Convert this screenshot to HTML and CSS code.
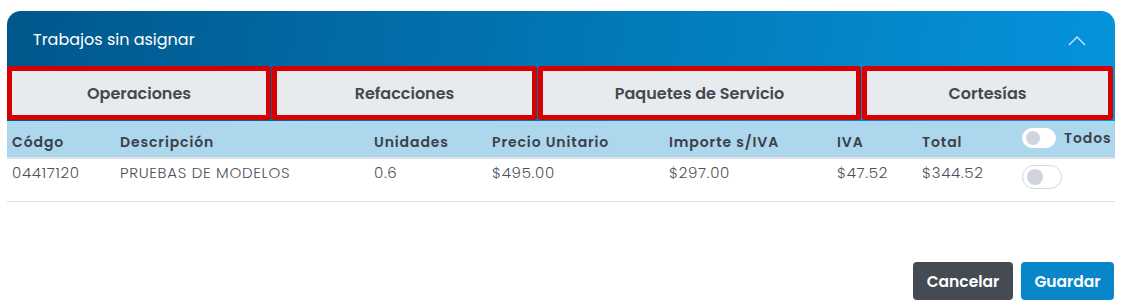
FILE: index.html
```html
<!DOCTYPE html>
<html lang="es">
<head>
<meta charset="utf-8">
<link rel="stylesheet" href="styles.css">
</head>
<body>
<div class="card">
  <div class="head">
    <div class="title-row">
      <span class="title">Trabajos sin asignar</span>
      <svg class="chev" width="18" height="11" viewBox="0 0 18 11"><path d="M1 10 L9 2 L17 10" fill="none" stroke="#cfe6f5" stroke-width="1.4"/></svg>
    </div>
    <div class="tabs">
      <div class="tab">Operaciones</div>
      <div class="tab">Refacciones</div>
      <div class="tab">Paquetes de Servicio</div>
      <div class="tab">Cortesías</div>
    </div>
  </div>
  <div class="grid thead">
    <div>Códgo</div>
    <div>Descripción</div>
    <div>Unidades</div>
    <div>Precio Unitario</div>
    <div>Importe s/IVA</div>
    <div>IVA</div>
    <div>Total</div>
    <div class="todos"><span class="toggle small"><span class="knob"></span></span><span>Todos</span></div>
  </div>
  <div class="grid trow">
    <div>04417120</div>
    <div>PRUEBAS DE MODELOS</div>
    <div>0.6</div>
    <div>$495.00</div>
    <div>$297.00</div>
    <div>$47.52</div>
    <div>$344.52</div>
    <div class="cell-toggle"><span class="toggle"><span class="knob"></span></span></div>
  </div>
  <div class="actions">
    <button class="btn cancel">Cancelar</button>
    <button class="btn save">Guardar</button>
  </div>
</div>
</body>
</html>
```
FILE: styles.css
```css
* { box-sizing: border-box; }
body {
  margin: 0;
  background: #ffffff;
  font-family: "Poppins", "Open Sans", "DejaVu Sans", sans-serif;
}
.card {
  margin: 11px 7px 0 7px;
  width: 1108px;
}
.head {
  border-radius: 14px 14px 0 0;
  background: linear-gradient(100deg, #00578b 0%, #0276b4 50%, #0594dd 100%);
}
.title-row {
  height: 55px;
  display: flex;
  align-items: center;
  justify-content: space-between;
  padding: 0 29px 0 26px;
}
.title {
  color: #ffffff;
  font-size: 16px;
  margin-top: 1px;
}
.chev { display: block; margin-top: 3px; }
.tabs {
  display: grid;
  grid-template-columns: 264px 265px 323px 251px;
  column-gap: 1px;
  padding-bottom: 1px;
}
.tab {
  height: 54px;
  border: 5px solid #d60000;
  border-radius: 3px;
  background: #e8ebee;
  display: flex;
  align-items: center;
  justify-content: center;
  font-size: 16px;
  font-weight: 600;
  color: #44484f;
}
.grid {
  display: grid;
  grid-template-columns: 108px 254px 118px 177px 168px 85px 100px 1fr;
}
.grid > div { padding-left: 5px; }
.thead {
  height: 38px;
  background: #acd7ed;
  border-bottom: 2px solid #dfe2e6;
  align-items: center;
  font-size: 14px;
  font-weight: 600;
  letter-spacing: 0.9px;
  color: #3b4048;
}
.thead > div { padding-top: 6px; }
.thead > .todos {
  display: flex;
  align-items: center;
  gap: 8px;
  padding-top: 0;
  margin-top: -2px;
}
.trow {
  height: 43px;
  border-bottom: 1px solid #dcdfe3;
  align-items: start;
  font-size: 15px;
  font-weight: 300;
  letter-spacing: 0.7px;
  color: #4b5058;
}
.trow > div { padding-top: 2px; }
.trow > .cell-toggle { padding-top: 5px; }
.toggle {
  display: inline-flex;
  align-items: center;
  width: 40px;
  height: 24px;
  border: 1px solid #d3d7de;
  border-radius: 12px;
  background: #fff;
  padding-left: 4px;
  vertical-align: middle;
}
.toggle .knob {
  width: 16px;
  height: 16px;
  border-radius: 50%;
  background: #cfd4de;
}
.toggle.small {
  width: 34px;
  height: 20px;
  border-color: #fff;
  padding-left: 3px;
}
.toggle.small .knob { width: 14px; height: 14px; }
.actions {
  display: flex;
  justify-content: flex-end;
  gap: 8px;
  margin-top: 60px;
  padding-right: 1px;
}
.btn {
  height: 38px;
  border: none;
  border-radius: 4px;
  color: #fff;
  font-family: inherit;
  font-size: 15.5px;
  font-weight: 600;
  padding: 0;
}
.cancel { width: 100px; background: #454b53; }
.save { width: 93px; background: #0787c9; }
```
